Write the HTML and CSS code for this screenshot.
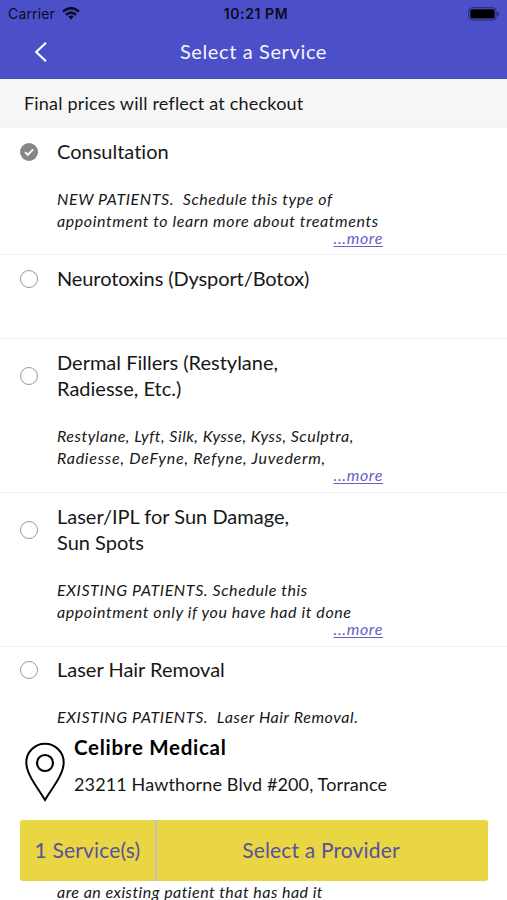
FILE: index.html
```html
<!DOCTYPE html>
<html lang="en">
<head>
<meta charset="utf-8">
<meta name="viewport" content="width=device-width">
<title>Select a Service</title>
<link rel="stylesheet" href="styles.css">
</head>
<body>
<div class="app">
  <header class="header">
    <div class="status">
      <div class="carrier"><span>Carrier</span>
        <svg class="wifi" viewBox="0 0 18 13" width="18" height="13"><g fill="none" stroke="#0b0b20" stroke-width="2.5"><path d="M1 4.6Q9 -2.3 17 4.6"/><path d="M3.9 7.8Q9 3.4 14.1 7.8"/></g><path d="M6.2 9.5Q9 7.3 11.8 9.5L9 12.5Z" fill="#0b0b20"/></svg>
      </div>
      <div class="clock">10:21 PM</div>
      <svg class="battery" viewBox="0 0 32 14" width="32" height="14"><rect x=".7" y=".7" width="27.4" height="12.4" rx="3.5" fill="none" stroke="#29296f"/><rect x="2.3" y="2.3" width="24.3" height="9.2" rx="2" fill="#000"/><path d="M29.4 4.7Q31.2 5.3 31.2 7T29.4 9.2Z" fill="#29296f"/></svg>
    </div>
    <div class="nav">
      <svg class="back" viewBox="0 0 14 22" width="14" height="22"><path d="M12 1.8L2.2 11L12 20.2" fill="none" stroke="#fff" stroke-width="2.1"/></svg>
      <h1>Select a Service</h1>
    </div>
  </header>
  <div class="notice">Final prices will reflect at checkout</div>
  <main class="list">
    <section class="row">
      <div class="head"><svg class="check" viewBox="0 0 18 18" width="18" height="18"><circle cx="9" cy="9" r="9" fill="#868686"/><path d="M5 9.2L7.8 12L13.2 6.3" fill="none" stroke="#fff" stroke-width="1.9"/></svg><h2>Consultation</h2></div>
      <p class="desc">NEW PATIENTS.&nbsp; Schedule this type of<br>appointment to learn more about treatments</p>
      <a class="more">...more</a>
    </section>
    <section class="row short">
      <div class="head"><i class="radio"></i><h2 class="tight">Neurotoxins (Dysport/Botox)</h2></div>
    </section>
    <section class="row tall">
      <div class="head"><i class="radio"></i><h2>Dermal Fillers (Restylane,<br>Radiesse, Etc.)</h2></div>
      <p class="desc"><span class="narrow">Restylane, Lyft, Silk, Kysse, Kyss, Sculptra,</span><br><span class="wide">Radiesse, DeFyne, Refyne, Juvederm,</span></p>
      <a class="more">...more</a>
    </section>
    <section class="row tall">
      <div class="head"><i class="radio"></i><h2>Laser/IPL for Sun Damage,<br>Sun Spots</h2></div>
      <p class="desc">EXISTING PATIENTS. Schedule this<br>appointment only if you have had it done</p>
      <a class="more">...more</a>
    </section>
    <section class="row last">
      <div class="head"><i class="radio"></i><h2>Laser Hair Removal</h2></div>
      <p class="desc">EXISTING PATIENTS.&nbsp; Laser Hair Removal.</p>
      <p class="desc tail">are an existing patient that has had it</p>
    </section>
  </main>
  <footer class="footer">
    <div class="place">
      <svg class="pin" viewBox="0 0 40 60" width="40" height="60"><path d="M20 58C13 46 1.3 32.500 1.300 20.500A18.700 18.700 0 0 1 38.700 20.500C38.700 32.500 27 46 20 58Z" fill="none" stroke="#000" stroke-width="2"/><circle cx="20" cy="21" r="8" fill="none" stroke="#000" stroke-width="2.2"/></svg>
      <div><div class="name">Celibre Medical</div><div class="address">23211 Hawthorne Blvd #200, Torrance</div></div>
    </div>
    <div class="actions"><div class="btn count">1 Service(s)</div><div class="btn provider">Select a Provider</div></div>
  </footer>
</div>
</body>
</html>
```
FILE: styles.css
```css
* { box-sizing: border-box; }
body, h1, h2, p { margin: 0; font-weight: 400; }
body { font-family: Lato, "Liberation Sans", sans-serif; font-variant-ligatures: none; color: #171717; background: #fff; }
svg { display: block; flex: none; }
.app { position: relative; width: 507px; height: 900px; overflow: hidden; }
.header { height: 79px; background: #4b50c9; }
.status { display: grid; grid-template-columns: 1fr auto 1fr; height: 27px; align-items: center; padding: 0 7px 0 8px; font-family: Inter, sans-serif; color: #0b0b20; }
.carrier { display: flex; gap: 7px; align-items: center; font-size: 14px; letter-spacing: .15px; }
.clock { margin-left: 4px; font-size: 14px; font-weight: 600; letter-spacing: .6px; }
.battery { justify-self: end; }
.nav { display: grid; grid-template-columns: 60px 1fr 60px; align-items: center; height: 50px; }
.back { margin-left: 34px; }
.nav h1 { margin-top: -2px; text-align: center; font-size: 20px; letter-spacing: .62px; color: #f5f5ff; }
.notice { height: 49px; padding-left: 24px; line-height: 49px; background: #f6f6f6; border-bottom: 1px solid #f2f2f2; font-size: 18px; letter-spacing: .2px; }
.row { height: 127px; padding-top: 10px; border-bottom: 1px solid #f0f0f0; }
.short { height: 84px; }
.tall { height: 154px; }
.last { height: auto; border: 0; padding-top: 9px; }
.head { display: flex; align-items: center; gap: 19px; padding-left: 20px; margin-bottom: 24px; }
.head h2 { font-size: 20px; line-height: 26px; letter-spacing: 0; white-space: nowrap; }
.head .tight { letter-spacing: -.1px; }
.check, .radio { position: relative; top: 1px; }
.radio { width: 18px; height: 18px; flex: none; border: 1.500px solid #999; border-radius: 50%; }
.desc { margin-left: 57px; font-size: 16px; line-height: 22px; font-style: italic; letter-spacing: .59px; white-space: nowrap; }
.narrow { letter-spacing: .52px; }
.wide { letter-spacing: .75px; }
.more { display: block; width: 383px; margin-top: -1px; text-align: right; font-size: 16px; line-height: 14px; font-style: italic; letter-spacing: .65px; color: #6660ca; text-decoration: underline; text-underline-offset: 2px; text-decoration-thickness: 1px; }
.tail { margin-top: 153px; letter-spacing: .47px; }
.footer { position: absolute; left: 0; right: 0; top: 730px; height: 151px; padding: 0 19px 0 20px; background: #fff; }
.place { display: flex; gap: 9px; height: 90px; padding-left: 5px; }
.pin { margin-top: 12px; }
.name { margin-top: 4px; font-size: 20.5px; line-height: 26px; font-weight: 700; letter-spacing: .72px; color: #000; }
.address { margin-top: 11px; font-size: 18px; line-height: 26px; letter-spacing: .13px; }
.actions { display: flex; gap: 2px; height: 61px; border-radius: 3px; background: linear-gradient(90deg, #fff 130px, #c5c3b5 134px, #c5c3b5 138px, #fff 142px); }
.btn { border-radius: 3px; background: #ead542; color: #5752a0; font-size: 21px; line-height: 59px; text-align: center; letter-spacing: .16px; }
.count { width: 135px; }
.provider { flex: 1; padding-right: 3px; }
```
